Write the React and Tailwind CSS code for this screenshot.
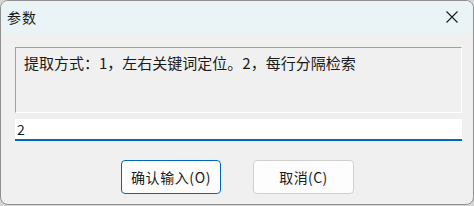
export default function App() {
  const font = { fontFamily: '"Noto Sans CJK SC", "Noto Sans", sans-serif' };
  return (
    <div className="w-[474px] h-[206px] bg-[#d6d6d6]" style={font}>
      <div className="w-[474px] h-[205px] rounded-lg border border-[#8f8f8f] bg-[#f0f0f0] overflow-hidden flex flex-col">
        {/* title bar */}
        <div className="h-[32px] bg-[#eaf4f7] flex items-center justify-between pl-[6px] pr-[14px] shrink-0">
          <span className="text-[14px] text-[#1a1a1a] leading-none tracking-[1px]">参数</span>
          <svg width="12" height="12" viewBox="0 0 12 12" className="mr-[1px]">
            <path d="M0.5 0.5 L11.5 11.5 M11.5 0.5 L0.5 11.5" stroke="#1a1a1a" strokeWidth="1.1" />
          </svg>
        </div>
        {/* body */}
        <div className="flex flex-col pl-[14px] pr-[11px] pt-[14px]">
          <div className="h-[66px] border-t border-l border-[#a0a0a0] border-r border-b border-r-white border-b-white pl-[8px] pt-[4px]">
            <p className="text-[15px] text-[#1a1a1a] leading-[22px]">
              提取方式：1，左右关键词定位。2，每行分隔检索
            </p>
          </div>
          <div className="mt-[6px] h-[22px] bg-white border-b-2 border-[#0067c0] flex items-center pl-[2px]">
            <span className="text-[14px] text-[#1a1a1a] leading-none">2</span>
          </div>
          <div className="mt-[19px] flex justify-center gap-[32px] pr-[2px]">
            <button className="w-[100px] h-[34px] rounded-[4px] border border-[#0067c0] bg-[#fdfdfd] text-[14px] text-[#1a1a1a] leading-none tracking-[0.6px]">
              确认输入(O)
            </button>
            <button className="w-[101px] h-[34px] rounded-[4px] border border-[#d0d0d0] bg-[#fdfdfd] text-[14px] text-[#1a1a1a] leading-none tracking-[0.4px]">
              取消(C)
            </button>
          </div>
        </div>
      </div>
    </div>
  );
}
